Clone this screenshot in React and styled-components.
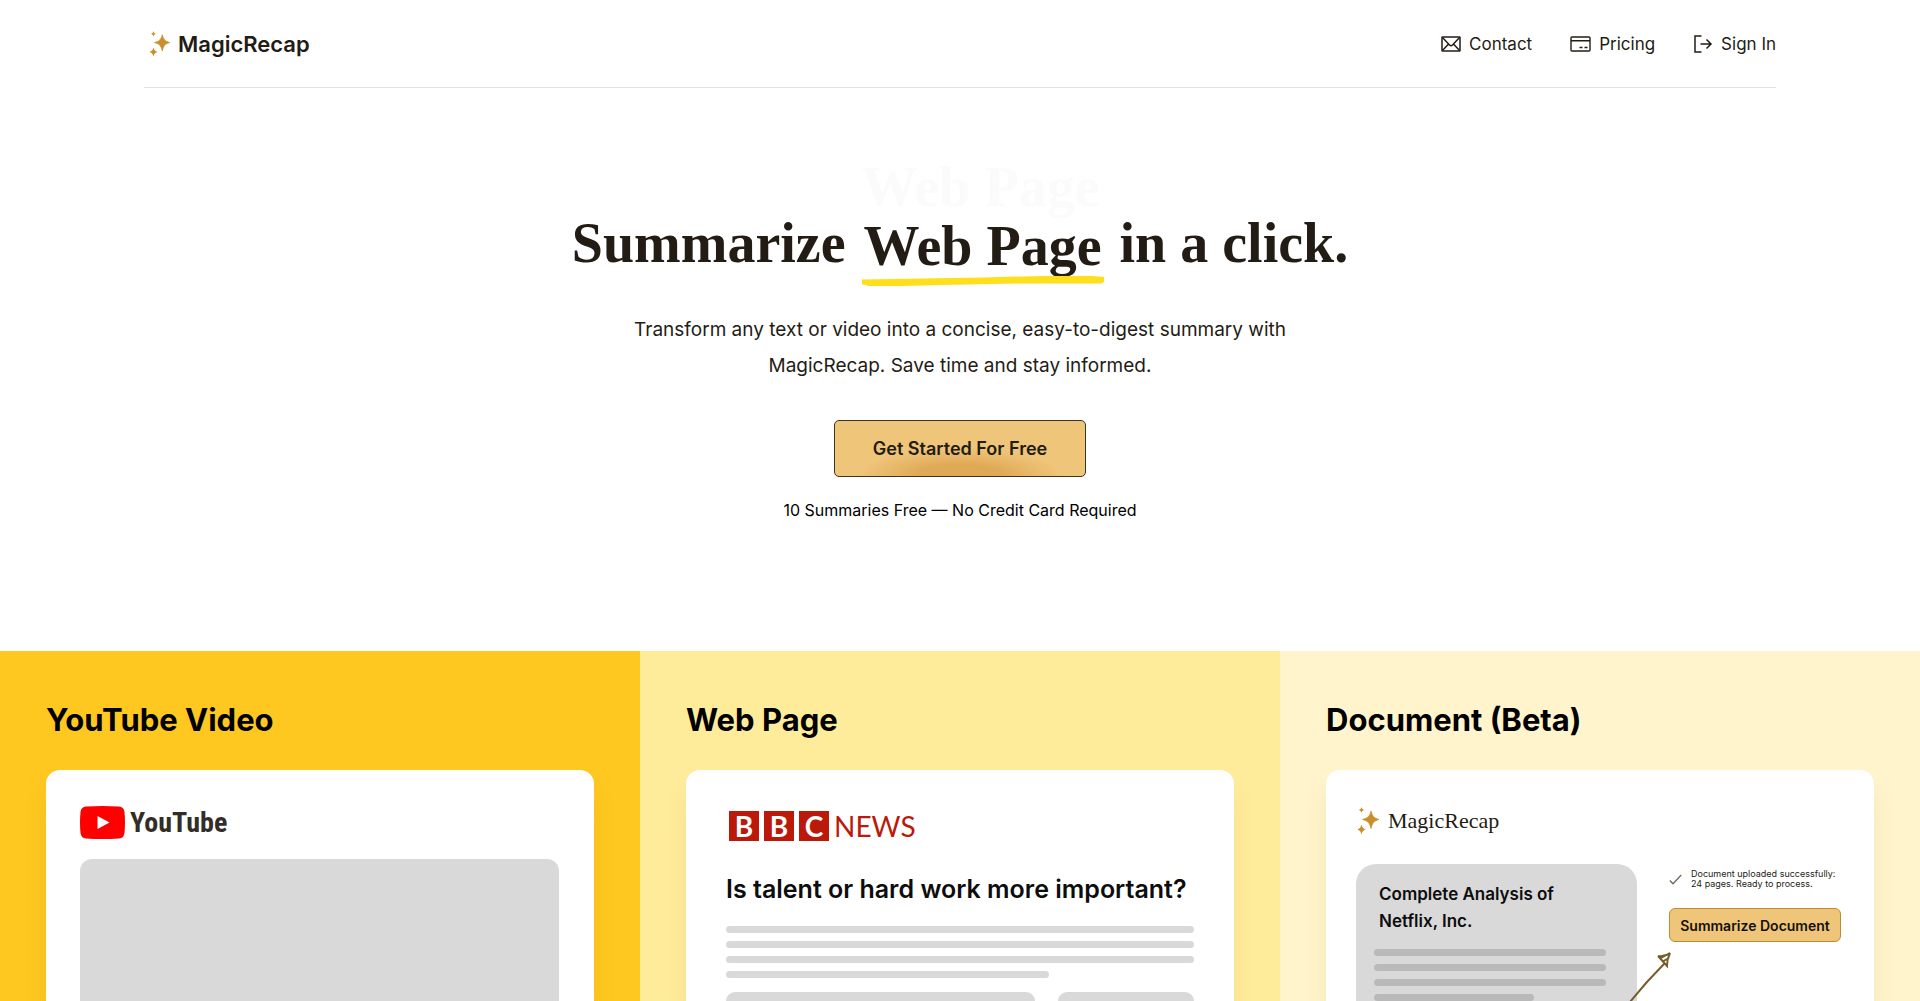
import styled, { createGlobalStyle } from "styled-components";

const GlobalStyle = createGlobalStyle`
  * {
    box-sizing: border-box;
  }
  body {
    margin: 0;
    background: #fff;
    color: #231c14;
    font-family: Inter, "Liberation Sans", sans-serif;
  }
  h1, h2, h3, p {
    margin: 0;
  }
`;

const Page = styled.div`
  display: flex;
  flex-direction: column;
  min-height: 100vh;
`;

const Header = styled.header`
  display: flex;
  justify-content: space-between;
  align-items: center;
  width: 85%;
  height: 88px;
  margin: 0 auto;
  border-bottom: 1px solid #e2e2e2;
`;

const Logo = styled.a`
  display: flex;
  align-items: center;
  gap: 7px;
  padding-left: 4px;
  color: #231c14;
  font-size: 22px;
  font-weight: 600;
  text-decoration: none;
`;

const Nav = styled.nav`
  display: flex;
  gap: 38px;
`;

const NavLink = styled.a`
  display: flex;
  align-items: center;
  gap: 8px;
  color: #231c14;
  font-size: 17px;
  font-weight: 400;
  line-height: 24px;
  text-decoration: none;
`;

const Hero = styled.section`
  display: flex;
  flex-direction: column;
  align-items: center;
  padding: 123px 24px 129px;
  text-align: center;
`;

const Title = styled.h1`
  display: flex;
  gap: 16px;
  font-family: "Liberation Serif", serif;
  font-size: 56px;
  font-weight: 700;
  line-height: 64px;
`;

const Rotator = styled.span`
  position: relative;
  display: flex;
  flex-direction: column;
  padding-top: 5px;
  line-height: 60px;
`;

const LeavingWord = styled.span`
  position: absolute;
  top: -54px;
  left: 0;
  color: #fbfbfb;
  white-space: nowrap;
`;

const Underline = styled.svg`
  display: block;
  width: 100%;
  height: 10px;
`;

const Subtitle = styled.p`
  max-width: 690px;
  margin-top: 26px;
  font-size: 19px;
  font-weight: 400;
  line-height: 36px;
`;

const StartButton = styled.button`
  height: 57px;
  margin-top: 36px;
  padding: 0 38px;
  border: 1px solid #3d3420;
  border-radius: 5px;
  background: radial-gradient(ellipse 100px 28px at 50% 100%, #dfa955 40%, #efc57a 100%);
  color: #231c14;
  font-family: inherit;
  font-size: 18px;
  font-weight: 600;
`;

const Note = styled.p`
  margin-top: 21px;
  color: #000;
  font-size: 16px;
  font-weight: 400;
  line-height: 24px;
`;

const Features = styled.section`
  flex: 1;
  display: grid;
  grid-template-columns: repeat(3, 1fr);
`;

const Feature = styled.article`
  display: flex;
  flex-direction: column;
  padding: 49px 46px 0;
  background: ${(props) => props.$color};
  overflow: hidden;
`;

const FeatureTitle = styled.h2`
  margin-bottom: 30px;
  color: #000;
  font-size: 31px;
  font-weight: 700;
  line-height: 40px;
`;

const Card = styled.div`
  flex: 1;
  display: flex;
  flex-direction: column;
  padding: ${(props) => props.$padding};
  border-radius: 14px 14px 0 0;
  background: #fff;
  box-shadow: 0 20px 24px rgb(120 80 0 / 8%);
`;

const YouTubeLogo = styled.div`
  display: flex;
  align-items: center;
  gap: 5px;
  height: 33px;
  margin-bottom: 20px;
  color: #332d27;
  font-family: "Roboto Condensed", "Liberation Sans Narrow", "Liberation Sans", sans-serif;
  font-size: 28px;
  font-weight: 700;
`;

const Video = styled.div`
  flex: 1;
  min-height: 142px;
  border-radius: 12px 12px 0 0;
  background: #d9d9d9;
`;

const BbcLogo = styled.div`
  display: flex;
  align-items: center;
  gap: 5px;
  margin-left: 3px;
  color: #bb1a0b;
  font-family: Lato, sans-serif;
  font-size: 28px;
  line-height: 30px;
`;

const BbcBlock = styled.span`
  width: 30px;
  height: 30px;
  background: #bb1a0b;
  color: #fff;
  font-weight: 700;
  text-align: center;
`;

const ArticleTitle = styled.h3`
  margin: 31px 0 20px;
  color: #0d0d0d;
  font-size: 25px;
  font-weight: 600;
  line-height: 34px;
  white-space: nowrap;
`;

const Lines = styled.div`
  display: flex;
  flex-direction: column;
  gap: 8px;
`;

const Line = styled.span`
  width: ${(props) => props.$width || "100%"};
  height: 7px;
  border-radius: 4px;
  background: ${(props) => props.$color || "#d9d9d9"};
`;

const Tiles = styled.div`
  flex: 1;
  display: grid;
  grid-template-columns: 309fr 136fr;
  gap: 23px;
  margin-top: 14px;
`;

const Tile = styled.div`
  border-radius: 12px 12px 0 0;
  background: #d9d9d9;
`;

const RecapLogo = styled.div`
  display: flex;
  align-items: center;
  gap: 8px;
  height: 29px;
  margin-bottom: 29px;
  font-family: "Liberation Serif", serif;
  font-size: 22px;
`;

const Workspace = styled.div`
  position: relative;
  flex: 1;
  display: grid;
  grid-template-columns: 281px 172px;
  gap: 32px;
`;

const Document = styled.div`
  padding: 17px 31px 0 18px;
  border-radius: 20px 20px 0 0;
  background: #d9d9d9;
`;

const DocumentTitle = styled.h3`
  margin: 0 0 14px 5px;
  color: #0d0d0d;
  font-size: 17px;
  font-weight: 600;
  line-height: 27px;
`;

const Status = styled.p`
  display: flex;
  align-items: center;
  gap: 9px;
  margin: 5px 0 19px;
  font-size: 9px;
  line-height: 10px;
  white-space: nowrap;
`;

const SummarizeButton = styled.button`
  width: 100%;
  height: 34px;
  padding: 0;
  border: 1px solid #bf8a33;
  border-radius: 6px;
  background: #efc57a;
  color: #14110c;
  font-family: inherit;
  font-size: 14px;
  font-weight: 600;
`;

const Arrow = styled.svg`
  position: absolute;
  top: 86px;
  left: 266px;
`;

function Sparkles({ width, height }) {
  return (
    <svg width={width} height={height} viewBox="0 0 22 28" fill="#c98f2d" aria-hidden="true">
      <path d="M14 4C15.500 9.500 17 11 22 12.500C17 14 15.500 15.500 14 21.500C12.500 15.500 11 14 5.500 12.500C11 11 12.500 9.500 14 4Z" stroke="#c98f2d" strokeWidth="0.800" strokeLinejoin="round" />
      <path d="M4.500 0C5.100 2 5.500 2.400 7.200 3C5.500 3.600 5.100 4 4.500 6C3.900 4 3.500 3.600 1.800 3C3.500 2.400 3.900 2 4.500 0Z" />
      <path d="M4.500 17.500C5.400 20.800 6 21.500 9 22.500C6 23.500 5.400 24.200 4.500 27.500C3.600 24.200 3 23.500 0 22.500C3 21.500 3.600 20.800 4.500 17.500Z" />
    </svg>
  );
}

function MailIcon() {
  return (
    <svg width="20" height="16" viewBox="0 0 20 16" fill="none" stroke="#231c14" strokeWidth="1.500" aria-hidden="true">
      <rect x="1" y="1" width="18" height="14" rx="0.500" />
      <path d="M1.500 1.500L8.500 9Q10 10.300 11.500 9L18.500 1.500M1.500 14.500L7.500 8M18.500 14.500L12.500 8" />
    </svg>
  );
}

function CardIcon() {
  return (
    <svg width="21" height="16" viewBox="0 0 21 16" fill="none" stroke="#231c14" strokeWidth="1.400" aria-hidden="true">
      <rect x="1" y="1" width="19" height="14" rx="1" />
      <path d="M1 4.700H20M9.500 11.500H12.500M14.500 11.500H17.500" />
    </svg>
  );
}

function SignInIcon() {
  return (
    <svg width="20" height="18" viewBox="0 0 20 18" fill="none" stroke="#231c14" strokeWidth="1.500" aria-hidden="true">
      <path d="M8.500 1H2V17H8.500M7.500 9H18M13.500 4.500L18 9L13.500 13.500" />
    </svg>
  );
}

function App() {
  return (
    <Page>
      <GlobalStyle />
      <Header>
        <Logo href="#">
          <Sparkles width="23" height="26" />
          MagicRecap
        </Logo>
        <Nav>
          <NavLink href="#contact">
            <MailIcon />
            Contact
          </NavLink>
          <NavLink href="#pricing">
            <CardIcon />
            Pricing
          </NavLink>
          <NavLink href="#signin">
            <SignInIcon />
            Sign In
          </NavLink>
        </Nav>
      </Header>

      <Hero>
        <Title>
          <span>Summarize</span>
          <Rotator>
            <LeavingWord aria-hidden="true">Web Page</LeavingWord>
            Web Page
            <Underline viewBox="0 0 242 10" preserveAspectRatio="none" aria-hidden="true">
              <path d="M0 3.500L30 3L120 1.500L180 0L230 0L242 1V6L239 7.500L160 7.500L80 9L40 10H5V9L0 8.500Z" fill="#ffdf1b" />
            </Underline>
          </Rotator>
          <span>in a click.</span>
        </Title>
        <Subtitle>
          Transform any text or video into a concise, easy-to-digest summary with
          MagicRecap. Save time and stay informed.
        </Subtitle>
        <StartButton type="button">Get Started For Free</StartButton>
        <Note>10 Summaries Free — No Credit Card Required</Note>
      </Hero>

      <Features>
        <Feature $color="#fec820">
          <FeatureTitle>YouTube Video</FeatureTitle>
          <Card $padding="36px 35px 0 34px">
            <YouTubeLogo>
              <svg width="45" height="33" viewBox="0 0 45 33" aria-hidden="true">
                <path d="M6 0.500Q22.500 -0.500 39 0.500Q44 1 44.500 6Q45.500 16.500 44.500 27Q44 32 39 32.500Q22.500 33.500 6 32.500Q1 32 0.500 27Q-0.500 16.500 0.500 6Q1 1 6 0.500Z" fill="#f00" />
                <path d="M17.500 10L29.500 16.500L17.500 23Z" fill="#fff" />
              </svg>
              <span>YouTube</span>
            </YouTubeLogo>
            <Video />
          </Card>
        </Feature>

        <Feature $color="#ffec9b">
          <FeatureTitle>Web Page</FeatureTitle>
          <Card $padding="41px 40px 0">
            <BbcLogo>
              <BbcBlock>B</BbcBlock>
              <BbcBlock>B</BbcBlock>
              <BbcBlock>C</BbcBlock>
              <span>NEWS</span>
            </BbcLogo>
            <ArticleTitle>Is talent or hard work more important?</ArticleTitle>
            <Lines>
              <Line />
              <Line />
              <Line />
              <Line $width="69%" />
            </Lines>
            <Tiles>
              <Tile />
              <Tile />
            </Tiles>
          </Card>
        </Feature>

        <Feature $color="#fff4cb">
          <FeatureTitle>Document (Beta)</FeatureTitle>
          <Card $padding="36px 30px 0">
            <RecapLogo>
              <Sparkles width="24" height="28" />
              MagicRecap
            </RecapLogo>
            <Workspace>
              <Document>
                <DocumentTitle>
                  Complete Analysis of
                  <br />
                  Netflix, Inc.
                </DocumentTitle>
                <Lines>
                  <Line $color="#b9b9b9" />
                  <Line $color="#b9b9b9" />
                  <Line $color="#b9b9b9" />
                  <Line $color="#b9b9b9" $width="69%" />
                </Lines>
              </Document>
              <div>
                <Status>
                  <svg width="13" height="11" viewBox="0 0 13 11" fill="none" stroke="#6b6a5c" strokeWidth="1.300" aria-hidden="true">
                    <path d="M0.800 6.500L4 9.800L12.200 1" />
                  </svg>
                  <span>
                    Document uploaded successfully:
                    <br />
                    24 pages. Ready to process.
                  </span>
                </Status>
                <SummarizeButton type="button">Summarize Document</SummarizeButton>
              </div>
              <Arrow width="50" height="52" viewBox="0 0 50 52" fill="none" stroke="#755c29" strokeWidth="2" aria-hidden="true">
                <path d="M8 52Q24 32 42 14M36 6Q43 7 48 3Q45 9 45 16L36 6M39 8L48 3M40 12L45 9" />
              </Arrow>
            </Workspace>
          </Card>
        </Feature>
      </Features>
    </Page>
  );
}

export default App;
